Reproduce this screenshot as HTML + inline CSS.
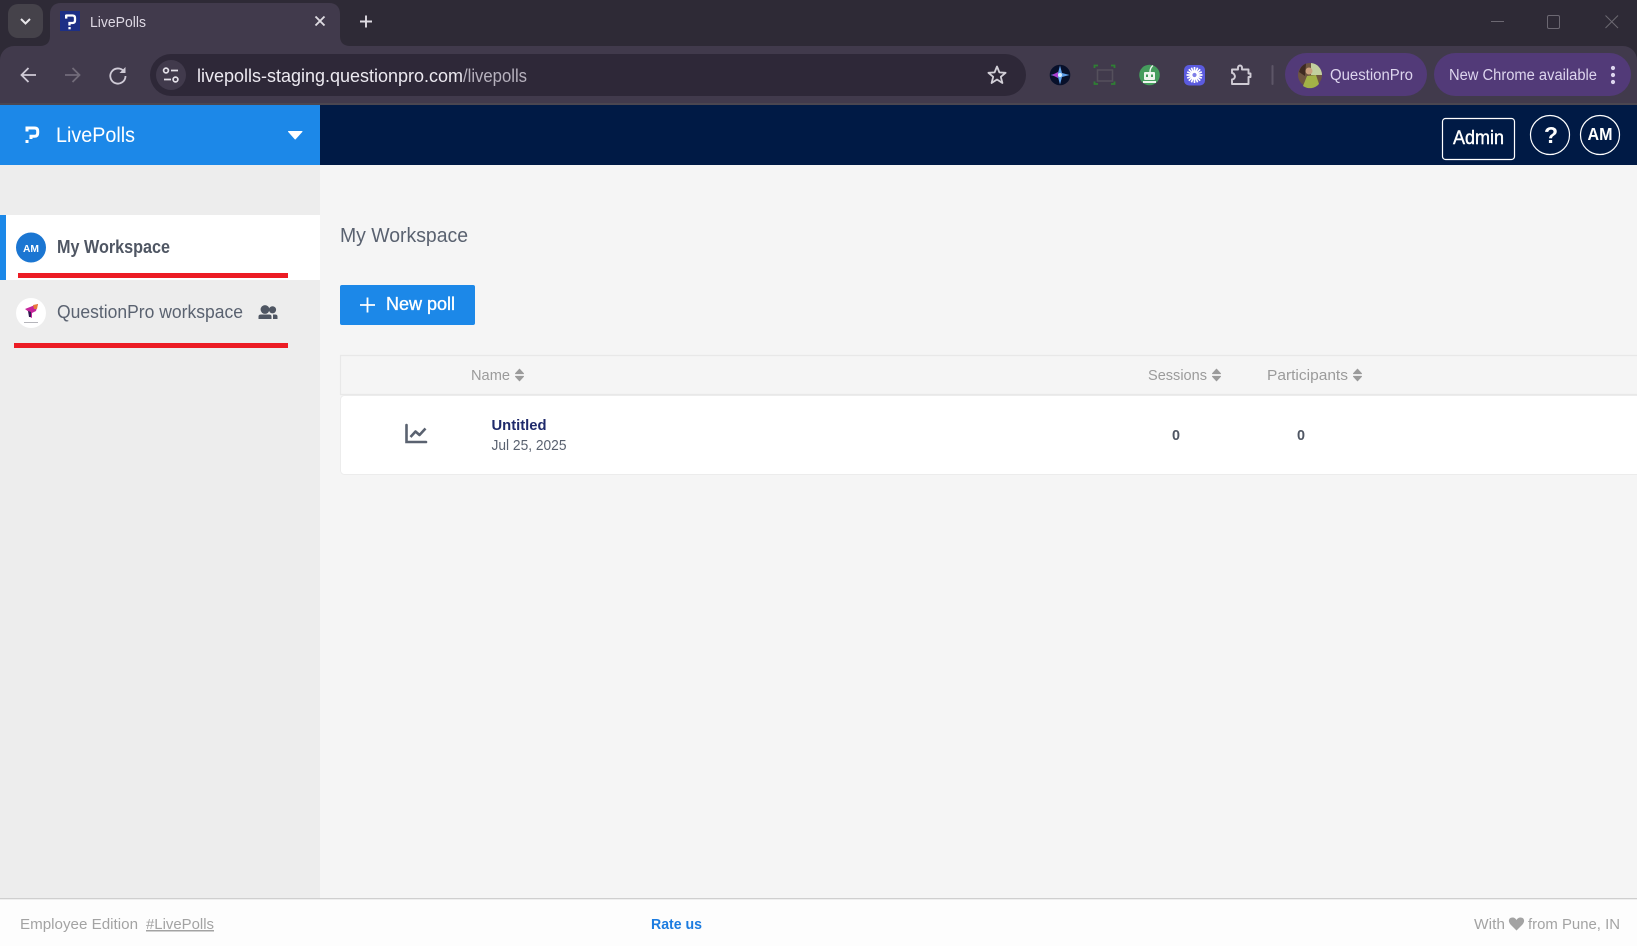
<!DOCTYPE html>
<html lang="en">
<head>
<meta charset="utf-8">
<title>LivePolls</title>
<style>
html,body{margin:0;padding:0;width:1637px;height:946px;overflow:hidden;background:#f5f5f5}
svg{display:block;position:absolute;left:0;top:0}
text{font-family:"Liberation Sans",Arial,sans-serif}
</style>
</head>
<body>
<svg width="1637" height="946" viewBox="0 0 1637 946" xmlns="http://www.w3.org/2000/svg">
<!-- chrome strip -->
<rect x="0" y="0" width="1637" height="46" fill="#2e2a36"/>
<rect x="0" y="46" width="1637" height="59" fill="#413a4c"/>
<path d="M0 46H14A14 14 0 0 0 0 60Z" fill="#2e2a36"/>
<path d="M1637 46H1623A14 14 0 0 1 1637 60Z" fill="#2e2a36"/>
<rect x="0" y="103" width="1637" height="2" fill="#4a4650"/>
<rect x="8" y="4" width="35" height="34" rx="10" fill="#45424a"/>
<path d="M21 19L25.5 23.5L30 19" fill="none" stroke="#e8e6ea" stroke-width="2"/>
<!-- tab -->
<path d="M40 46C46 46 50 43 50 36V14C50 7 54 3 61 3H329C336 3 340 7 340 14V36C340 43 344 46 350 46Z" fill="#413a4c"/>
<rect x="60" y="11" width="20" height="20" fill="#1d2f85"/>
<path d="M65.5 15.5H72.5Q75 15.5 75 18V20.5Q75 23 72.5 23H69.5V25.5" fill="none" stroke="#fff" stroke-width="2.3"/>
<rect x="65" y="15" width="2.4" height="3.6" fill="#fff"/>
<rect x="68.4" y="27" width="2.3" height="2.3" fill="#fff"/>
<text x="90" y="27" font-size="15" fill="#ded9e4" textLength="56" lengthAdjust="spacingAndGlyphs">LivePolls</text>
<path d="M315.5 16.5L324.5 25.5M324.5 16.5L315.5 25.5" stroke="#dedbe2" stroke-width="1.9"/>
<path d="M366 15.5V27.5M360 21.5H372" stroke="#dedbe2" stroke-width="1.9"/>
<!-- window controls -->
<path d="M1491 21.5H1504" stroke="#6c6872" stroke-width="1"/>
<rect x="1547.5" y="15.5" width="12" height="13" rx="1.5" fill="none" stroke="#6c6872"/>
<path d="M1605.5 15.5L1618 28M1618 15.5L1605.5 28" stroke="#6c6872" stroke-width="1"/>
<!-- nav -->
<path d="M36 75H22M28.5 68L21.5 75L28.5 82" fill="none" stroke="#cfcad6" stroke-width="1.8"/>
<path d="M65 75H79M72.5 68L79.5 75L72.5 82" fill="none" stroke="#716b79" stroke-width="1.8"/>
<path d="M124 71.5A7.6 7.6 0 1 0 125.5 76" fill="none" stroke="#cfcad6" stroke-width="1.8"/>
<path d="M125.5 67V73H119.5Z" fill="#cfcad6"/>
<!-- omnibox -->
<rect x="150" y="54" width="876" height="42" rx="21" fill="#2e2838"/>
<circle cx="171" cy="75" r="15" fill="#413a4c"/>
<circle cx="166" cy="70.5" r="2.4" fill="none" stroke="#e3e0e8" stroke-width="1.7"/>
<path d="M171 70.5H178M164 79.5H171" stroke="#e3e0e8" stroke-width="1.8"/>
<circle cx="175.5" cy="79.5" r="2.4" fill="none" stroke="#e3e0e8" stroke-width="1.7"/>
<text x="197" y="82" font-size="18.5" fill="#ece9f0" textLength="266" lengthAdjust="spacingAndGlyphs">livepolls-staging.questionpro.com</text>
<text x="463" y="82" font-size="18.5" fill="#b6b1bd" textLength="64" lengthAdjust="spacingAndGlyphs">/livepolls</text>
<path d="M997 66.5L999.4 72.4L1005.6 72.8L1000.8 76.8L1002.4 83L997 79.5L991.6 83L993.2 76.8L988.4 72.8L994.6 72.4Z" fill="none" stroke="#d2cfd7" stroke-width="1.8" stroke-linejoin="round"/>
<!-- extensions -->
<circle cx="1060" cy="75" r="10.3" fill="#08102a"/>
<path d="M1060 65.5L1062 73L1069.5 75L1062 77L1060 84.5L1058 77L1050.5 75L1058 73Z" fill="#5f9fe8"/>
<path d="M1052 75L1058 72L1058 78Z" fill="#a83fd0"/>
<circle cx="1060" cy="75" r="2" fill="#d8efff"/>
<path d="M1094.5 68V65.5H1098M1111 65.5H1114.5V68M1094.5 81.5V84H1098M1111 84H1114.5V81.5" fill="none" stroke="#2f7f33" stroke-width="1.8"/>
<rect x="1097.5" y="70" width="15" height="11" fill="none" stroke="#55505c" stroke-width="1.5"/>
<circle cx="1149.5" cy="75" r="10.3" fill="#459c5d"/>
<rect x="1144" y="72" width="11" height="8" rx="1" fill="#eef5ef"/>
<path d="M1150 72C1150 69 1151 67 1153 65.5" fill="none" stroke="#eef5ef" stroke-width="1.4"/>
<rect x="1146" y="74.5" width="2" height="2.5" fill="#459c5d"/><rect x="1151" y="74.5" width="2" height="2.5" fill="#459c5d"/>
<path d="M1143 82H1156" stroke="#eef5ef" stroke-width="2"/>
<rect x="1184" y="65" width="21" height="20.5" rx="5" fill="#5b5bdf"/>
<g stroke="#fff" stroke-width="1.7"><path d="M1194.5 67V83M1186.5 75H1202.5M1188.8 69.3L1200.2 80.7M1200.2 69.3L1188.8 80.7M1191.4 67.7L1197.6 82.3M1197.6 67.7L1191.4 82.3M1187.2 71.9L1201.8 78.1M1201.8 71.9L1187.2 78.1"/></g>
<circle cx="1194.5" cy="75" r="2.6" fill="#7f7fe8" stroke="#fff" stroke-width="1"/>
<path d="M1232 69.5H1238V67.5A2 2 0 0 1 1242 67.5V69.5H1248.5V73.5H1250.5V77H1248.5V84H1232V79.5A3 3 0 0 0 1234.5 75A3 3 0 0 0 1232 73Z" fill="none" stroke="#d0ccd5" stroke-width="1.9" stroke-linejoin="round"/>
<rect x="1271.5" y="65" width="2" height="20" rx="1" fill="#5d5667"/>
<!-- pills -->
<rect x="1285" y="53" width="142" height="43" rx="21.5" fill="#523a78"/>
<rect x="1434" y="53" width="197" height="43" rx="21.5" fill="#523a78"/>
<circle cx="1310" cy="75" r="12" fill="#6e5540"/>
<path d="M1311 63A12 12 0 0 1 1322 75H1311Z" fill="#c2cf9f"/>
<path d="M1303 86L1307 76L1316 75L1319 84A12 12 0 0 1 1303 86Z" fill="#a3b247"/>
<circle cx="1309" cy="71" r="3.5" fill="#caa07e"/>
<path d="M1299 72A12 12 0 0 1 1306 63.5L1305 76Z" fill="#3f2a22"/>
<text x="1330" y="80" font-size="15.5" fill="#ddd5ee" textLength="83" lengthAdjust="spacingAndGlyphs">QuestionPro</text>
<text x="1449" y="80" font-size="15.5" fill="#ddd5ee" textLength="148" lengthAdjust="spacingAndGlyphs">New Chrome available</text>
<circle cx="1613" cy="68" r="2.1" fill="#ddd5ee"/><circle cx="1613" cy="75" r="2.1" fill="#ddd5ee"/><circle cx="1613" cy="82" r="2.1" fill="#ddd5ee"/>

<!-- app header -->
<rect x="0" y="105" width="320" height="60" fill="#1c88e8"/>
<rect x="320" y="105" width="1317" height="60" fill="#001a45"/>
<path d="M26 128H34.5Q37.7 128 37.7 131V133Q37.7 136.3 34.5 136.3H31V139" fill="none" stroke="#fff" stroke-width="3"/>
<rect x="25.5" y="126.5" width="3" height="5" fill="#fff"/>
<rect x="25.5" y="140" width="3" height="3" fill="#fff"/>
<text x="56" y="142" font-size="21" fill="#fff" textLength="79" lengthAdjust="spacingAndGlyphs">LivePolls</text>
<path d="M288.5 131.5H302L295.2 139Z" fill="#fff" stroke="#fff" stroke-width="1" stroke-linejoin="round"/>
<rect x="1442.5" y="118.5" width="72" height="41" rx="3" fill="none" stroke="#fff" stroke-width="1.2"/>
<text x="1453" y="144" font-size="19" fill="#fff" stroke="#fff" stroke-width=".4" textLength="51" lengthAdjust="spacingAndGlyphs">Admin</text>
<circle cx="1550" cy="135" r="19.5" fill="none" stroke="#fff" stroke-width="1.2"/>
<text x="1544" y="143" font-size="23" font-weight="bold" fill="#fff">?</text>
<circle cx="1600" cy="135" r="19.5" fill="none" stroke="#fff" stroke-width="1.2"/>
<text x="1587.5" y="140" font-size="17.5" font-weight="bold" fill="#fff" textLength="25" lengthAdjust="spacingAndGlyphs">AM</text>

<!-- sidebar -->
<rect x="0" y="165" width="320" height="733" fill="#ededed"/>
<rect x="320" y="165" width="1317" height="733" fill="#f5f5f5"/>
<rect x="0" y="215" width="320" height="65" fill="#fff"/>
<rect x="0" y="215" width="6" height="65" fill="#1c88e8"/>
<circle cx="31" cy="247.5" r="15" fill="#1b76d2"/>
<text x="23" y="252" font-size="10.5" font-weight="bold" fill="#fff" textLength="16" lengthAdjust="spacingAndGlyphs">AM</text>
<text x="57" y="253" font-size="18" font-weight="bold" fill="#4f5663" textLength="113" lengthAdjust="spacingAndGlyphs">My Workspace</text>
<rect x="18" y="273" width="270" height="5" fill="#ec1c24"/>
<circle cx="31" cy="313" r="15" fill="#fff"/>
<path d="M25 309L35 305L38 304L36 311L32 313L32 318L30 317L29 312Z" fill="#c5259b"/>
<path d="M33 305L38 304L37 309L34 309Z" fill="#e87b3a"/>
<path d="M28 311L31 312L31 317L29 317Z" fill="#301a50"/>
<rect x="24" y="322" width="14" height="1" fill="#b5b5bb"/>
<text x="57" y="318" font-size="18" fill="#5a6270" textLength="186" lengthAdjust="spacingAndGlyphs">QuestionPro workspace</text>
<circle cx="265" cy="309.5" r="4.4" fill="#4f5663"/>
<circle cx="272.5" cy="309.8" r="3.6" fill="#4f5663"/>
<path d="M258.5 319V316.5Q258.5 314.5 261 314.5H269Q271.5 314.5 271.5 316.5V319Z" fill="#4f5663"/>
<path d="M273 314.5H275Q277.5 314.5 277.5 316.5V319H273Z" fill="#4f5663"/>
<rect x="14" y="343" width="274" height="5" fill="#ec1c24"/>

<!-- content -->
<text x="340" y="242" font-size="20" fill="#5a6270" textLength="128" lengthAdjust="spacingAndGlyphs">My Workspace</text>
<rect x="340" y="285" width="135" height="40" rx="2" fill="#1c88e8"/>
<path d="M367.5 297.5V312.5M360 305H375" stroke="#fff" stroke-width="1.8"/>
<text x="386" y="310" font-size="18" fill="#fff" stroke="#fff" stroke-width=".35" textLength="69" lengthAdjust="spacingAndGlyphs">New poll</text>

<!-- table -->
<path d="M1637 355.5H340.5V394.5H1637" fill="none" stroke="#e8e8e8" stroke-width="1.2"/>
<text x="471" y="380" font-size="15" fill="#9b9b9b" textLength="39" lengthAdjust="spacingAndGlyphs">Name</text>
<path d="M519.5 369.2L523.5 373.6H515.5ZM519.5 380.8L523.5 376.4H515.5Z" fill="#9b9b9b" stroke="#9b9b9b" stroke-width="1" stroke-linejoin="round"/>
<text x="1148" y="380" font-size="15" fill="#9b9b9b" textLength="59" lengthAdjust="spacingAndGlyphs">Sessions</text>
<path d="M1216.5 369.2L1220.5 373.6H1212.5ZM1216.5 380.8L1220.5 376.4H1212.5Z" fill="#9b9b9b" stroke="#9b9b9b" stroke-width="1" stroke-linejoin="round"/>
<text x="1267" y="380" font-size="15" fill="#9b9b9b" textLength="81" lengthAdjust="spacingAndGlyphs">Participants</text>
<path d="M1357.5 369.2L1361.5 373.6H1353.5ZM1357.5 380.8L1361.5 376.4H1353.5Z" fill="#9b9b9b" stroke="#9b9b9b" stroke-width="1" stroke-linejoin="round"/>
<rect x="340.5" y="395.5" width="1310" height="79" rx="4" fill="#fff" stroke="#ececec"/>
<path d="M406.5 425V442H426" fill="none" stroke="#5a6270" stroke-width="2.6" stroke-linecap="round"/>
<path d="M410.5 437L415.5 431.5L419.5 435L425.5 428.5" fill="none" stroke="#5a6270" stroke-width="2.6" stroke-linejoin="round"/>
<text x="491.5" y="430" font-size="15" font-weight="bold" fill="#1f2a6b" textLength="55" lengthAdjust="spacingAndGlyphs">Untitled</text>
<text x="491.5" y="450" font-size="15" fill="#5a6270" textLength="75" lengthAdjust="spacingAndGlyphs">Jul 25, 2025</text>
<text x="1172" y="440" font-size="15" font-weight="bold" fill="#4f5663" textLength="8" lengthAdjust="spacingAndGlyphs">0</text>
<text x="1297" y="440" font-size="15" font-weight="bold" fill="#4f5663" textLength="8" lengthAdjust="spacingAndGlyphs">0</text>

<!-- footer -->
<rect x="0" y="898" width="1637" height="48" fill="#fdfdfd"/>
<rect x="0" y="898" width="1637" height="1.3" fill="#cfcfcf"/>
<text x="20" y="929" font-size="15" fill="#a3a3a3" textLength="118" lengthAdjust="spacingAndGlyphs">Employee Edition</text>
<text x="146" y="929" font-size="15" fill="#a3a3a3" text-decoration="underline" textLength="68" lengthAdjust="spacingAndGlyphs">#LivePolls</text>
<text x="651" y="929" font-size="15" font-weight="bold" fill="#1c7ce0" textLength="51" lengthAdjust="spacingAndGlyphs">Rate us</text>
<text x="1474" y="929" font-size="15" fill="#a3a3a3" textLength="31" lengthAdjust="spacingAndGlyphs">With</text>
<path d="M1516.5 930.5L1510.5 924.5C1507.5 921 1509 917.5 1512.5 917.5C1514.5 917.5 1515.7 918.5 1516.5 920C1517.3 918.5 1518.5 917.5 1520.5 917.5C1524 917.5 1525.5 921 1522.5 924.5Z" fill="#a3a3a3"/>
<text x="1528" y="929" font-size="15" fill="#a3a3a3" textLength="92" lengthAdjust="spacingAndGlyphs">from Pune, IN</text>
</svg>
</body>
</html>
